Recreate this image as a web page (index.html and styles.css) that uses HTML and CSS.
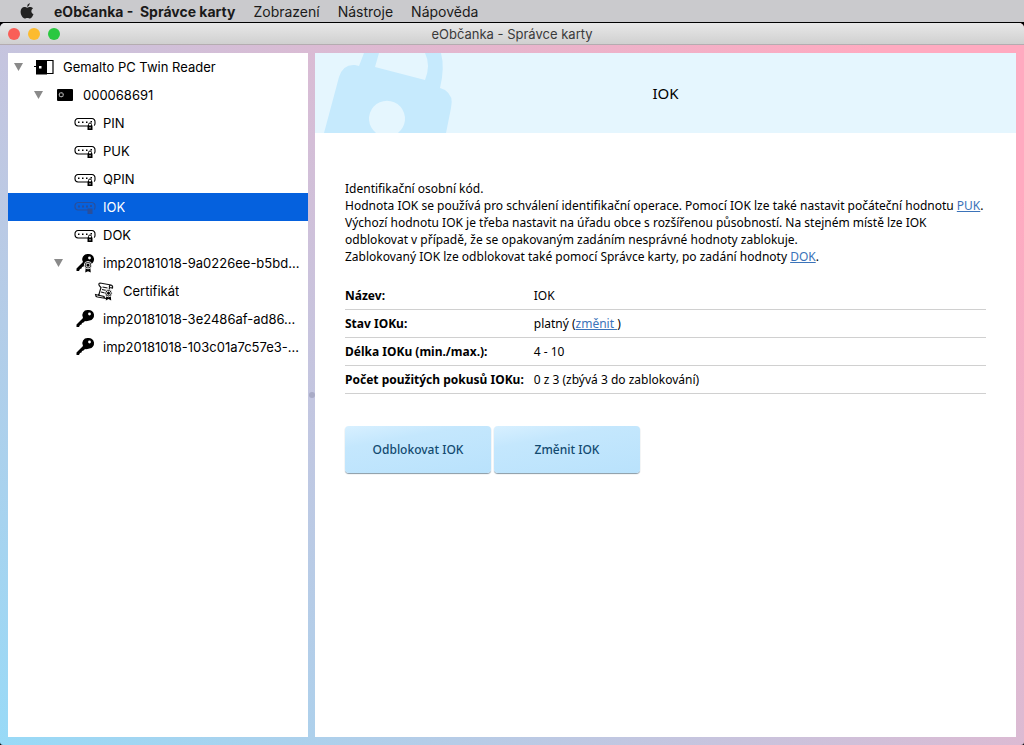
FILE: index.html
```html
<!DOCTYPE html>
<html lang="cs">
<head>
<meta charset="utf-8">
<title>eObčanka - Správce karty</title>
<link rel="stylesheet" href="styles.css">
</head>
<body>
<svg class="symbols" aria-hidden="true">
  <symbol id="code" viewBox="0 0 22 16">
    <path d="M14 11H4A3.200 3.200 0 0 1 1 8V7A3.200 3.200 0 0 1 4 3.500H18A3.200 3.200 0 0 1 21 7V8.500Q21 10 20 10.500" fill="none" stroke="currentColor" stroke-width="1.100"/>
    <path d="M4 6.500h1.500v1.500H4zM8 6.500h1.500v1.500H8zM12 6.500h1.500v1.500h-1.500zM16.500 6h1.500v1.500h-1.500zM13.500 10.500h5v4.500h-5z" fill="currentColor"/>
    <path d="M14.500 11V9.500a1.500 1.500 0 0 1 3 0V11" fill="none" stroke="currentColor"/>
    <path d="M15.500 12h1v1.500h-1z" fill="#fff"/>
  </symbol>
  <symbol id="key" viewBox="0 0 22 20">
    <path d="M14 1a5.300 5.300 0 0 1 1.500 10.500Q12 12.500 11 12L9.500 13.500 8 14 7.500 15.500 6 16 5 18H2.500V15.500L9 9A5.300 5.300 0 0 1 14 1z" fill="currentColor"/>
    <circle cx="15.500" cy="5" r="1.400" fill="#fff"/>
  </symbol>
  <symbol id="badge" viewBox="0 0 10 13">
    <path d="M2.500 7L2 12.500 5 11l3 1.500L7.500 7z" fill="currentColor"/>
    <circle cx="5" cy="4.500" r="4" fill="currentColor" stroke="#fff"/>
    <circle cx="5" cy="4.500" r="2.200" fill="none" stroke="#fff"/>
  </symbol>
</svg>

<header class="menubar">
  <svg class="apple" viewBox="0 0 14 16" aria-hidden="true">
    <path d="M9.700 0Q9.800 3 7 3.900 7 1 9.700 0zM7.200 4.700C8 4.700 9 3.900 10.300 4c1.200 0 2.100.6 2.700 1.400-2.400 1.400-2 4.600.5 5.700C12.800 13.300 11.500 15.500 10.100 15.500c-1 0-1.500-.6-2.700-.6s-1.800.6-2.700.6C2.900 15.500.6 12 .6 8.800c0-3 1.900-4.700 3.800-4.700 1.200 0 2.100.6 2.800.6z" fill="#222"/>
  </svg>
  <nav class="menu">
    <button class="menu-app">eObčanka -&nbsp; Správce karty</button>
    <button>Zobrazení</button>
    <button>Nástroje</button>
    <button>Nápověda</button>
  </nav>
</header>

<div class="window">
  <div class="titlebar">
    <div class="lights">
      <button class="light close" aria-label="Zavřít"></button>
      <button class="light minimize" aria-label="Minimalizovat"></button>
      <button class="light zoom" aria-label="Zvětšit"></button>
    </div>
    <span class="title">eObčanka - Správce karty</span>
  </div>

  <div class="panes">
    <nav class="tree">
      <button class="node level-0"><span class="arrow"></span>
        <svg class="icon" viewBox="0 0 22 20" aria-hidden="true"><path d="M0 9.500h4M13 3.500h6v13h-6" fill="none" stroke="#000" stroke-width="1.200"/><path d="M2 3h11v14.500H2z"/><path d="M5 9h2.500v2.500H5z" fill="#fff"/></svg>
        <span class="label">Gemalto PC Twin Reader</span></button>
      <button class="node level-1"><span class="arrow"></span>
        <svg class="icon" viewBox="0 0 22 20" aria-hidden="true"><rect x="3" y="4" width="16" height="12" rx="1"/><path d="M5.500 8h3.500v3.500H5.500zM4.500 9.800h1M9 9.800h1M7.200 7v1M7.200 11.500v1" fill="none" stroke="#bbb" stroke-width=".8"/></svg>
        <span class="label">000068691</span></button>
      <button class="node level-2"><span class="arrow none"></span><svg class="icon" aria-hidden="true"><use href="#code"/></svg><span class="label">PIN</span></button>
      <button class="node level-2"><span class="arrow none"></span><svg class="icon" aria-hidden="true"><use href="#code"/></svg><span class="label">PUK</span></button>
      <button class="node level-2"><span class="arrow none"></span><svg class="icon" aria-hidden="true"><use href="#code"/></svg><span class="label">QPIN</span></button>
      <button class="node level-2 selected" aria-current="true"><span class="arrow none"></span>
        <svg class="icon" viewBox="0 0 22 16" aria-hidden="true"><path d="M14 11H4A3.200 3.200 0 0 1 1 8V7A3.200 3.200 0 0 1 4 3.500H18A3.200 3.200 0 0 1 21 7V8.500Q21 10 20 10.500" fill="none" stroke="currentColor" stroke-width="1.200"/><path d="M4 6.500h2v2H4zM8 6.500h2v2H8zM12 6.500h2v2h-2zM16 6h2v2h-2zM13.500 9.500h5V15h-5z" fill="currentColor"/></svg>
        <span class="label">IOK</span></button>
      <button class="node level-2"><span class="arrow none"></span><svg class="icon" aria-hidden="true"><use href="#code"/></svg><span class="label">DOK</span></button>
      <button class="node level-2"><span class="arrow"></span>
        <svg class="icon" viewBox="0 0 22 20" aria-hidden="true"><use href="#key" width="22" height="20"/><use href="#badge" x="9" y="8" width="10" height="12"/></svg>
        <span class="label">imp20181018-9a0226ee-b5bd...</span></button>
      <button class="node level-3"><span class="arrow none"></span>
        <svg class="icon" viewBox="0 0 22 20" aria-hidden="true"><path d="M6 2l11 2q2 .5 1.500 3L15.500 6.500M6 2Q4 2.500 5.500 5L7 6.500 4.500 15M15.500 6.500Q15 4 17 4M15.500 6.500l-.5 3M1.500 13.500l8.500 2q0 2 2 2L3.500 16Q1.500 15.500 1.500 13.500zM8.500 6l5 1M8 8.500l4.500 1M7 11l4 1" fill="none" stroke="#111" stroke-width="1.200"/><use href="#badge" x="10" y="8" width="9" height="12"/></svg>
        <span class="label">Certifikát</span></button>
      <button class="node level-2"><span class="arrow none"></span><svg class="icon" aria-hidden="true"><use href="#key"/></svg><span class="label">imp20181018-3e2486af-ad86...</span></button>
      <button class="node level-2"><span class="arrow none"></span><svg class="icon" aria-hidden="true"><use href="#key"/></svg><span class="label">imp20181018-103c01a7c57e3-...</span></button>
    </nav>

    <div class="splitter"><span class="grip"></span></div>

    <main class="detail">
      <div class="banner">
        <svg class="padlock" viewBox="0 0 140 80" aria-hidden="true">
          <path d="M9 80L24 24Q28 11 40 12L44 13 49 0H64L60 14 110 27Q116 12 110 0H126Q130 15 125 35L130 37Q139 43 136 55L131 80H83A18 18 0 1 0 61 80z" fill="#c6eafd"/>
        </svg>
        <h1>IOK</h1>
      </div>
      <div class="content">
        <p>Identifikační osobní kód.<br>
          Hodnota IOK se používá pro schválení identifikační operace. Pomocí IOK lze také nastavit počáteční hodnotu <a href="#puk">PUK</a>.<br>
          Výchozí hodnotu IOK je třeba nastavit na úřadu obce s rozšířenou působností. Na stejném místě lze IOK odblokovat v případě, že se opakovaným zadáním nesprávné hodnoty zablokuje.<br>
          Zablokovaný IOK lze odblokovat také pomocí Správce karty, po zadání hodnoty <a href="#dok">DOK</a>.</p>
        <table>
          <tr><th scope="row">Název:</th><td>IOK</td></tr>
          <tr><th scope="row">Stav IOKu:</th><td>platný (<a href="#zmenit">změnit&nbsp;</a>)</td></tr>
          <tr><th scope="row">Délka IOKu (min./max.):</th><td>4 - 10</td></tr>
          <tr><th scope="row">Počet použitých pokusů IOKu:</th><td>0 z 3 (zbývá 3 do zablokování)</td></tr>
        </table>
        <div class="actions">
          <button>Odblokovat IOK</button>
          <button>Změnit IOK</button>
        </div>
      </div>
    </main>
  </div>
</div>
</body>
</html>
```
FILE: styles.css
```css
* {
  box-sizing: border-box;
}

body {
  margin: 0;
  height: 100vh;
  display: flex;
  flex-direction: column;
  background: #000;
  color: #000;
  font-family: Inter, "Liberation Sans", sans-serif;
  font-size: 13px;
}

button {
  font: inherit;
  color: inherit;
  border: 0;
  padding: 0;
  background: none;
}

.symbols {
  position: absolute;
  width: 0;
  height: 0;
}

.menubar {
  display: flex;
  align-items: center;
  gap: 20px;
  height: 22px;
  padding: 0 20px;
  background: #cacacd;
  font-size: 14px;
  color: #1a1a1a;
}

.apple {
  width: 14px;
  height: 16px;
}

.menu {
  display: flex;
  gap: 18px;
}

.menu button {
  white-space: nowrap;
}

.menu .menu-app {
  font-weight: 700;
}

.window {
  flex: 1;
  min-height: 0;
  margin-top: 1px;
  display: flex;
  flex-direction: column;
  overflow: hidden;
  border-radius: 5px 5px 3px 3px;
  background: linear-gradient(45deg, #98daf7, #ffaac0 90%);
}

.titlebar {
  display: grid;
  grid-template-columns: 1fr auto 1fr;
  align-items: center;
  height: 22px;
  padding: 0 8px;
  background: linear-gradient(#e8e8e8, #d0d0d0);
  border-bottom: 1px solid #b4acb0;
  color: #3a3a3a;
}

.lights {
  display: flex;
  gap: 8px;
}

.light {
  width: 12px;
  height: 12px;
  border-radius: 50%;
}

.close {
  background: #f95e57;
}

.minimize {
  background: #fcbb2f;
}

.zoom {
  background: #2ac840;
}

.panes {
  flex: 1;
  min-height: 0;
  display: flex;
  padding: 8px;
}

.tree {
  flex: 0 0 300px;
  min-width: 0;
  display: flex;
  flex-direction: column;
  background: #fff;
}

.node {
  display: flex;
  align-items: center;
  height: 28px;
  text-align: left;
}

.level-0 {
  padding-left: 6px;
}

.level-1 {
  padding-left: 26px;
}

.level-2 {
  padding-left: 46px;
}

.level-3 {
  padding-left: 66px;
}

.arrow {
  flex: none;
  width: 9px;
  height: 8px;
  margin-right: 11px;
  background: #8a8a8a;
  clip-path: polygon(0 0, 100% 0, 50% 100%);
}

.arrow.none {
  visibility: hidden;
}

.icon {
  flex: none;
  width: 22px;
  height: 20px;
  margin-right: 7px;
}

.label {
  overflow: hidden;
  text-overflow: ellipsis;
  white-space: nowrap;
}

.selected {
  background: #0561de;
  color: #fff;
}

.selected .icon {
  color: #294f9c;
}

.splitter {
  flex: 0 0 7px;
  display: flex;
  align-items: center;
  justify-content: center;
}

.grip {
  width: 6px;
  height: 6px;
  border-radius: 50%;
  background: #a9abc6;
}

.detail {
  flex: 1;
  min-width: 0;
  background: #fff;
  font-family: "Noto Sans", sans-serif;
  font-size: 12px;
  line-height: 17px;
}

.banner {
  position: relative;
  display: flex;
  align-items: center;
  justify-content: center;
  height: 80px;
  background: #e5f6fe;
}

.padlock {
  position: absolute;
  left: 0;
  top: 0;
  width: 140px;
  height: 80px;
}

h1 {
  margin: 0;
  font-size: 15px;
  font-weight: 400;
}

.content {
  padding: 47px 30px;
}

p {
  margin: 0 0 17px;
}

a {
  color: #3b73b9;
}

table {
  width: 100%;
  border-collapse: separate;
  border-spacing: 0;
}

th,
td {
  height: 28px;
  padding: 0 10px 0 0;
  border-bottom: 1px solid #d0d0d0;
  text-align: left;
}

th {
  width: 1px;
  white-space: nowrap;
}

.actions {
  display: flex;
  gap: 3px;
  margin-top: 32px;
}

.actions button {
  width: 146px;
  height: 47px;
  border-radius: 4px;
  background: linear-gradient(170deg, #d8f0ff, #c4e7fd 30%, #b9e2fc);
  box-shadow: 0 1px 1px #8899a5;
  color: #124a70;
  font-weight: 500;
}
```
